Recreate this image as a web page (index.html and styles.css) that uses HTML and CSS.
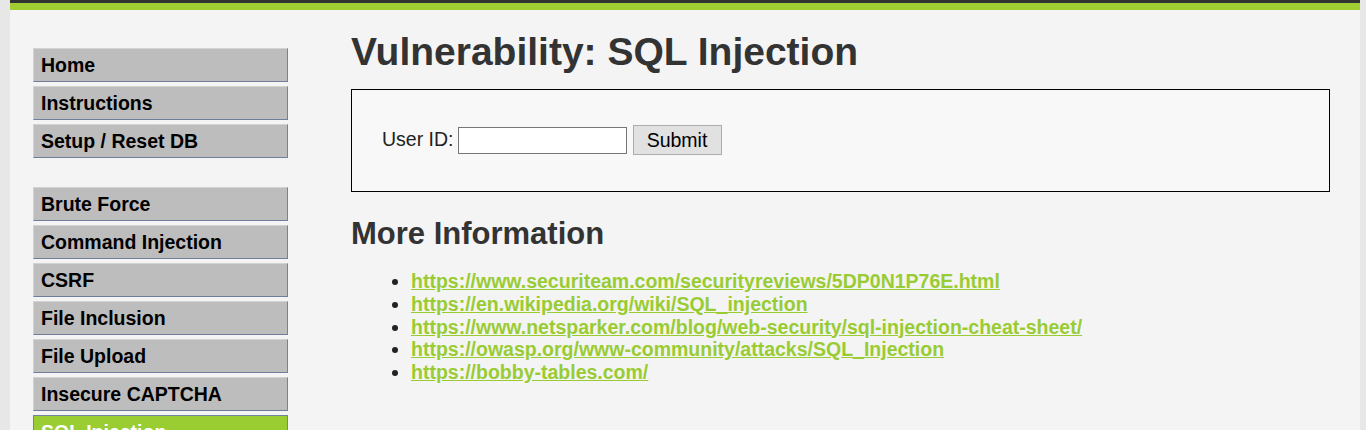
FILE: index.html
```html
<!DOCTYPE html>
<html lang="en">
<head>
<meta charset="utf-8">
<title>Vulnerability: SQL Injection</title>
<link rel="stylesheet" href="styles.css">
</head>
<body>
<div class="container">
  <div class="header"></div>
  <div class="main">
    <nav class="menu">
      <ul class="menu-group">
        <li><a href="#">Home</a></li>
        <li><a href="#">Instructions</a></li>
        <li><a href="#">Setup / Reset DB</a></li>
      </ul>
      <ul class="menu-group">
        <li><a href="#">Brute Force</a></li>
        <li><a href="#">Command Injection</a></li>
        <li><a href="#">CSRF</a></li>
        <li><a href="#">File Inclusion</a></li>
        <li><a href="#">File Upload</a></li>
        <li><a href="#">Insecure CAPTCHA</a></li>
        <li class="selected"><a href="#">SQL Injection</a></li>
        <li><a href="#">SQL Injection (Blind)</a></li>
      </ul>
    </nav>
    <div class="content">
      <h1 class="title">Vulnerability: SQL Injection</h1>
      <div class="vuln-box">
        <form class="form-row">
          <label class="label" for="uid">User ID:</label>
          <input class="text-input" id="uid" type="text">
          <button class="submit" type="button">Submit</button>
        </form>
      </div>
      <h2 class="subtitle">More Information</h2>
      <ul class="links">
        <li><a href="#">https://www.securiteam.com/securityreviews/5DP0N1P76E.html</a></li>
        <li><a href="#">https://en.wikipedia.org/wiki/SQL_injection</a></li>
        <li><a href="#">https://www.netsparker.com/blog/web-security/sql-injection-cheat-sheet/</a></li>
        <li><a href="#">https://owasp.org/www-community/attacks/SQL_Injection</a></li>
        <li><a href="#">https://bobby-tables.com/</a></li>
      </ul>
    </div>
  </div>
</div>
</body>
</html>
```
FILE: styles.css
```css
html, body {
  margin: 0;
  padding: 0;
}
body {
  background: #e7e7e7;
  font-family: "Liberation Sans", Arial, sans-serif;
  font-size: 19.5px;
  color: #000;
  overflow: hidden;
  height: 430px;
}
.container {
  margin: 0 6px 0 10px;
  background: #f4f4f4;
  min-height: 430px;
}
.header {
  height: 3px;
  background: #333333;
  border-bottom: 7px solid #a2cd32;
}
.main {
  display: flex;
  align-items: flex-start;
}
.menu {
  width: 255px;
  margin-left: 23px;
  margin-top: 38px;
  flex: none;
}
.menu-group {
  list-style: none;
  margin: 0 0 29px 0;
  padding: 0;
  display: flex;
  flex-direction: column;
  gap: 4px;
}
.menu-group a {
  display: block;
  background: #bdbdbd;
  color: #000;
  font-weight: bold;
  text-decoration: none;
  line-height: 22px;
  padding: 5px 0 5px 7px;
  border: 1px solid;
  border-color: #d2d2d2 #7382a0 #6e7e9b #d2d2d2;
}
.menu-group .selected a {
  background: #9acd32;
  color: #fff;
  border-color: #7382a0;
}
.content {
  margin-left: 63px;
  flex: 1;
  margin-right: 30px;
}
.title {
  margin: 19px 0 15px 0;
  font-size: 39px;
  line-height: 45px;
  font-weight: bold;
  color: #333;
}
.vuln-box {
  background: #f7f8f7;
  border: 1px solid #000;
  padding: 35px 30px 36px 30px;
}
.form-row {
  display: flex;
  align-items: center;
  margin: 0;
  height: 30px;
}
.label {
  color: #222;
  line-height: 22px;
  margin-bottom: 3px;
  margin-right: 4px;
}
.text-input {
  width: 165px;
  height: 25px;
  border: 1px solid #767676;
  padding: 0 1px;
  background: #fff;
  margin: 0 6px 0 0;
  font: inherit;
}
.submit {
  width: 89px;
  height: 30px;
  background: #e1e1e1;
  border: 1px solid #adadad;
  font: inherit;
  color: #000;
  padding: 0;
}
.subtitle {
  margin: 24px 0 19px 0;
  font-size: 31px;
  line-height: 35px;
  font-weight: bold;
  color: #333;
}
.links {
  margin: 0;
  padding-left: 60px;
  line-height: 22.75px;
  color: #222;
}
.links a {
  color: #99cc33;
  font-weight: bold;
  text-decoration: underline;
}
```
